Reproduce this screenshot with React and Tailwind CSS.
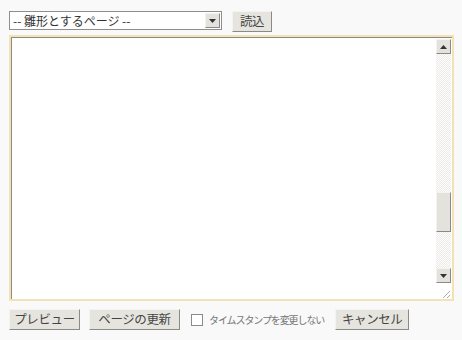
import React from 'react';

const font = { fontFamily: '"Noto Sans CJK JP", "Liberation Sans", sans-serif' };

function Btn({ children, className = '' }) {
    return (
        <button
            className={`h-[21px] px-0 whitespace-nowrap flex items-center justify-center bg-[#e6e4de] text-[12.5px] tracking-[-0.4px] leading-none text-[#444] border border-t-[#f4f3ef] border-l-[#f4f3ef] border-r-[#8a8a86] border-b-[#8a8a86] ${className}`}
            style={font}
        >
            {children}
        </button>
    );
}

function ArrowBox({ down, className = '' }) {
    return (
        <div className={`w-[15px] h-[15px] bg-[#e4e2dc] border border-t-[#f4f3ef] border-l-[#f4f3ef] border-r-[#8a8a86] border-b-[#8a8a86] flex items-center justify-center ${className}`}>
            <svg width="7" height="4" viewBox="0 0 7 4">
                {down ? <polygon points="0,0 7,0 3.5,4" fill="#333" /> : <polygon points="0,4 7,4 3.5,0" fill="#333" />}
            </svg>
        </div>
    );
}

export default function App() {
    return (
        <div className="w-[462px] h-[340px] bg-[#f9f9f9] pt-[11px] pl-[9px]" style={font}>
            <div className="flex items-start gap-[10px] h-[20px]">
                <div className="w-[213px] h-[19px] bg-white border border-[#8e8e8e] flex items-center justify-between pl-[3px] pr-[1px]">
                    <span className="text-[12px] leading-none text-[#333]">-- 雛形とするページ --</span>
                    <ArrowBox down />
                </div>
                <Btn className="w-[40px] h-[20px]">読込</Btn>
            </div>
            <div className="mt-[4px] w-[445px] h-[266px] border-2 border-[#f2e2b4] flex">
                <div className="flex-1 flex border-t border-l border-[#8a8a86] bg-white">
                    <div className="flex-1" />
                    <div className="w-[16px] flex flex-col pr-[1px] pt-[1px]">
                        <ArrowBox />
                        <div className="flex-1 bg-[repeating-conic-gradient(#eceae6_0%_25%,#ffffff_0%_50%)] bg-[length:2px_2px] flex flex-col">
                            <div className="h-[138px]" />
                            <div className="h-[40px] bg-[#e4e2dc] border border-t-[#f4f3ef] border-l-[#f4f3ef] border-r-[#8a8a86] border-b-[#8a8a86]" />
                        </div>
                        <ArrowBox down />
                        <div className="h-[16px] flex items-end justify-end">
                            <svg width="10" height="10" viewBox="0 0 10 10">
                                <line x1="9" y1="2" x2="2" y2="9" stroke="#b0aea8" />
                                <line x1="9" y1="6" x2="6" y2="9" stroke="#b0aea8" />
                            </svg>
                        </div>
                    </div>
                </div>
            </div>
            <div className="mt-[8px] flex items-center">
                <Btn className="w-[71px]">プレビュー</Btn>
                <Btn className="w-[91px] ml-[9px]">ページの更新</Btn>
                <div className="ml-[11px] w-[12px] h-[12px] border border-[#8a8a86] bg-white" />
                <span className="ml-[6px] text-[10px] tracking-[-1.1px] text-[#777] whitespace-nowrap">タイムスタンプを変更しない</span>
                <Btn className="w-[74px] ml-[11px]">キャンセル</Btn>
            </div>
        </div>
    );
}
